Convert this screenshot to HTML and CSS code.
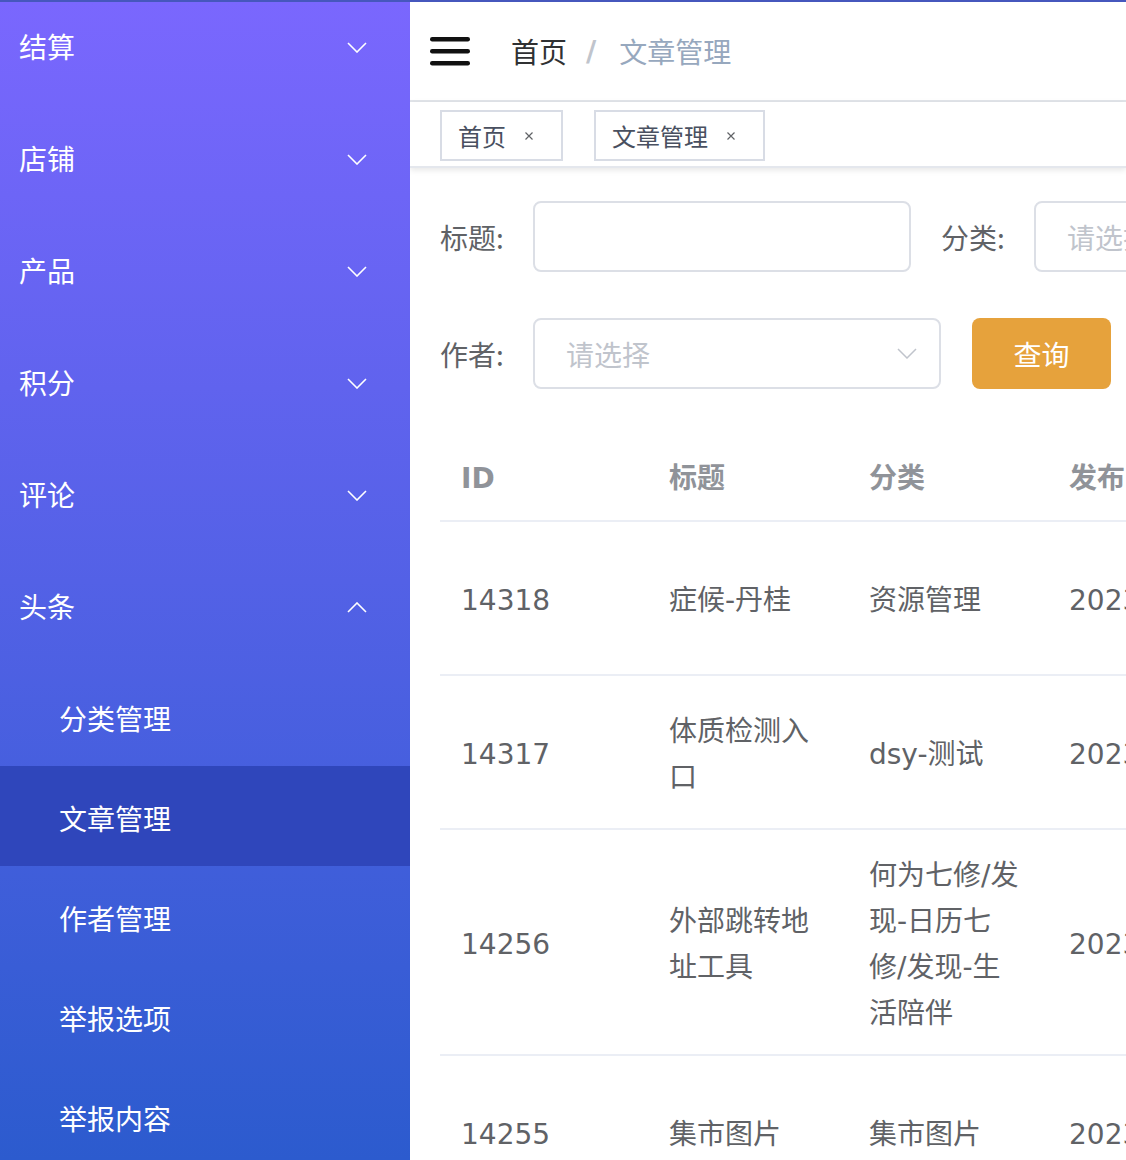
FILE: index.html
```html
<!DOCTYPE html>
<html lang="zh-CN">
<head>
<meta charset="utf-8">
<title>文章管理</title>
<link rel="stylesheet" href="styles.css">
</head>
<body>
<div class="topline"></div>
<div class="layout">
  <aside class="sidebar">
    <ul class="menu">
      <li class="menu-item"><span>结算</span><svg class="arrow" viewBox="0 0 20 11"><polyline points="1,1 10,10 19,1"/></svg></li>
      <li class="menu-item"><span>店铺</span><svg class="arrow" viewBox="0 0 20 11"><polyline points="1,1 10,10 19,1"/></svg></li>
      <li class="menu-item"><span>产品</span><svg class="arrow" viewBox="0 0 20 11"><polyline points="1,1 10,10 19,1"/></svg></li>
      <li class="menu-item"><span>积分</span><svg class="arrow" viewBox="0 0 20 11"><polyline points="1,1 10,10 19,1"/></svg></li>
      <li class="menu-item"><span>评论</span><svg class="arrow" viewBox="0 0 20 11"><polyline points="1,1 10,10 19,1"/></svg></li>
      <li class="menu-item"><span>头条</span><svg class="arrow" viewBox="0 0 20 11"><polyline points="1,10 10,1 19,10"/></svg></li>
      <li class="sub-item">分类管理</li>
      <li class="sub-item active">文章管理</li>
      <li class="sub-item">作者管理</li>
      <li class="sub-item">举报选项</li>
      <li class="sub-item">举报内容</li>
    </ul>
  </aside>
  <main class="main">
    <header class="navbar">
      <svg class="hamburger" viewBox="0 0 40 30"><rect x="0" y="1" width="40" height="4.5" rx="2.2"/><rect x="0" y="13" width="40" height="4.5" rx="2.2"/><rect x="0" y="25" width="40" height="4.5" rx="2.2"/></svg>
      <nav class="breadcrumb">
        <span class="crumb-link">首页</span>
        <span class="crumb-sep">/</span>
        <span class="crumb-current">文章管理</span>
      </nav>
    </header>
    <div class="tags">
      <span class="tag">首页<svg class="tag-close" viewBox="0 0 10 10"><path d="M1.5 1.5 L8.5 8.5 M8.5 1.5 L1.5 8.5"/></svg></span>
      <span class="tag">文章管理<svg class="tag-close" viewBox="0 0 10 10"><path d="M1.5 1.5 L8.5 8.5 M8.5 1.5 L1.5 8.5"/></svg></span>
    </div>
    <section class="content">
      <form class="filter">
        <div class="form-row">
          <div class="form-item">
            <label class="form-label">标题:</label>
            <div class="input input-title"></div>
          </div>
          <div class="form-item">
            <label class="form-label">分类:</label>
            <div class="input select select-cat"><span class="placeholder">请选择</span><svg class="select-arrow" viewBox="0 0 20 11"><polyline points="1,1 10,10 19,1"/></svg></div>
          </div>
        </div>
        <div class="form-row">
          <div class="form-item">
            <label class="form-label">作者:</label>
            <div class="input select select-author"><span class="placeholder">请选择</span><svg class="select-arrow" viewBox="0 0 20 11"><polyline points="1,1 10,10 19,1"/></svg></div>
          </div>
          <button type="button" class="btn-query">查询</button>
        </div>
      </form>
      <table class="table">
        <colgroup><col class="c-id"><col class="c-title"><col class="c-cat"><col class="c-date"></colgroup>
        <thead>
          <tr><th class="th-id">ID</th><th>标题</th><th>分类</th><th>发布时间</th></tr>
        </thead>
        <tbody>
          <tr><td><div class="cell">14318</div></td><td><div class="cell">症候-丹桂</div></td><td><div class="cell">资源管理</div></td><td><div class="cell">2023-03-28</div></td></tr>
          <tr><td><div class="cell">14317</div></td><td><div class="cell">体质检测入口</div></td><td><div class="cell">dsy-测试</div></td><td><div class="cell">2023-03-27</div></td></tr>
          <tr><td><div class="cell">14256</div></td><td><div class="cell">外部跳转地址工具</div></td><td><div class="cell">何为七修/发现-日历七修/发现-生活陪伴</div></td><td><div class="cell">2023-03-20</div></td></tr>
          <tr><td><div class="cell">14255</div></td><td><div class="cell">集市图片</div></td><td><div class="cell">集市图片</div></td><td><div class="cell">2023-03-20</div></td></tr>
        </tbody>
      </table>
    </section>
  </main>
</div>
</body>
</html>
```
FILE: styles.css
```css
* { box-sizing: border-box; }
html, body {
  margin: 0;
  padding: 0;
  width: 1126px;
  height: 1160px;
  overflow: hidden;
  font-family: "DejaVu Sans", "Noto Sans CJK SC", sans-serif;
  background: #fff;
}
.topline {
  height: 2px;
  background: #4657bd;
}
.layout {
  display: flex;
  height: 1158px;
  overflow: hidden;
}
.sidebar {
  width: 410px;
  flex-shrink: 0;
  background: linear-gradient(180deg, #7a67fe 0%, #2c5bce 100%);
  overflow: hidden;
}
.menu {
  list-style: none;
  margin: -8px 0 0 0;
  padding: 0;
  font-family: "Noto Sans CJK SC", sans-serif;
  color: #fff;
  font-size: 28px;
}
.menu-item {
  height: 112px;
  display: flex;
  align-items: center;
  justify-content: space-between;
  padding: 0 43px 0 19px;
}
.menu-item span { margin-top: -8px; }
.arrow {
  width: 20px;
  height: 11px;
  fill: none;
  stroke: #fff;
  stroke-width: 1.6;
  margin-top: -6px;
}
.sub-item {
  height: 100px;
  display: flex;
  align-items: center;
  padding-left: 59px;
  padding-top: 3px;
}
.sub-item.active { background: #2f46bb; }

.main {
  flex: 1;
  min-width: 0;
  overflow: hidden;
}
.navbar {
  height: 100px;
  border-bottom: 2px solid #e2e5ea;
  display: flex;
  align-items: center;
  padding-left: 20px;
}
.hamburger {
  width: 40px;
  height: 30px;
  fill: #111;
}
.breadcrumb {
  margin-left: 41px;
  font-family: "Noto Sans CJK SC", sans-serif;
  font-size: 28px;
  display: flex;
  align-items: center;
}
.crumb-link { color: #303133; }
.crumb-sep {
  font-family: "DejaVu Sans", sans-serif;
  font-weight: bold;
  color: #c0c4cc;
  margin: 0 23px 0 19px;
}
.crumb-current { color: #97a8be; }

.tags {
  height: 66px;
  border-bottom: 2px solid #e4e7ed;
  box-shadow: 0 2px 6px rgba(0, 0, 0, 0.1);
  display: flex;
  align-items: flex-start;
  padding: 8px 0 0 30px;
  gap: 31px;
  position: relative;
}
.tag {
  height: 51px;
  border: 2px solid #d8dce5;
  display: inline-flex;
  align-items: center;
  padding: 0 27px 0 16px;
  font-family: "Noto Sans CJK SC", sans-serif;
  font-size: 24px;
  color: #495060;
}
.tag-close {
  width: 10px;
  height: 10px;
  margin-left: 18px;
  fill: none;
  stroke: #606266;
  stroke-width: 1.2;
}

.content {
  padding: 33px 0 0 30px;
}
.filter { margin: 0; }
.form-row {
  display: flex;
  align-items: center;
  height: 71px;
  margin-bottom: 46px;
  white-space: nowrap;
}
.form-row:last-child { margin-bottom: 0; }
.form-item {
  display: flex;
  align-items: center;
  margin-right: 30px;
  flex-shrink: 0;
}
.form-label {
  width: 93px;
  font-family: "Noto Sans CJK SC", sans-serif;
  font-size: 28px;
  color: #606266;
}
.input {
  height: 71px;
  border: 2px solid #dcdfe6;
  border-radius: 8px;
  background: #fff;
  flex-shrink: 0;
}
.input-title { width: 378px; }
.select {
  display: flex;
  align-items: center;
  justify-content: space-between;
  padding: 0 22px 0 31px;
}
.select-cat { width: 408px; }
.select-author { width: 408px; }
.placeholder {
  font-family: "Noto Sans CJK SC", sans-serif;
  font-size: 28px;
  color: #c0c4cc;
}
.select-arrow {
  width: 20px;
  height: 11px;
  fill: none;
  stroke: #c0c4cc;
  stroke-width: 1.5;
}
.btn-query {
  width: 139px;
  height: 71px;
  margin-left: 1px;
  border: none;
  border-radius: 8px;
  background: #e6a23c;
  color: #fff;
  font-family: "Noto Sans CJK SC", sans-serif;
  font-size: 28px;
  padding: 0;
  flex-shrink: 0;
}

.table {
  margin-top: 45px;
  border-collapse: collapse;
  table-layout: fixed;
  width: 900px;
  font-size: 28px;
}
.c-id { width: 208px; }
.c-title { width: 200px; }
.c-cat { width: 200px; }
.c-date { width: 292px; }
.table th {
  text-align: left;
  color: #909399;
  font-weight: bold;
  line-height: 46px;
  padding: 22px 21px 18px;
  border-bottom: 2px solid #ebeef5;
  white-space: nowrap;
}
.table td {
  padding: 23px 21px 17px;
  border-bottom: 2px solid #ebeef5;
  color: #606266;
  line-height: 46px;
  vertical-align: middle;
}
.cell {
  min-height: 112px;
  display: flex;
  align-items: center;
  word-break: break-all;
}
```
